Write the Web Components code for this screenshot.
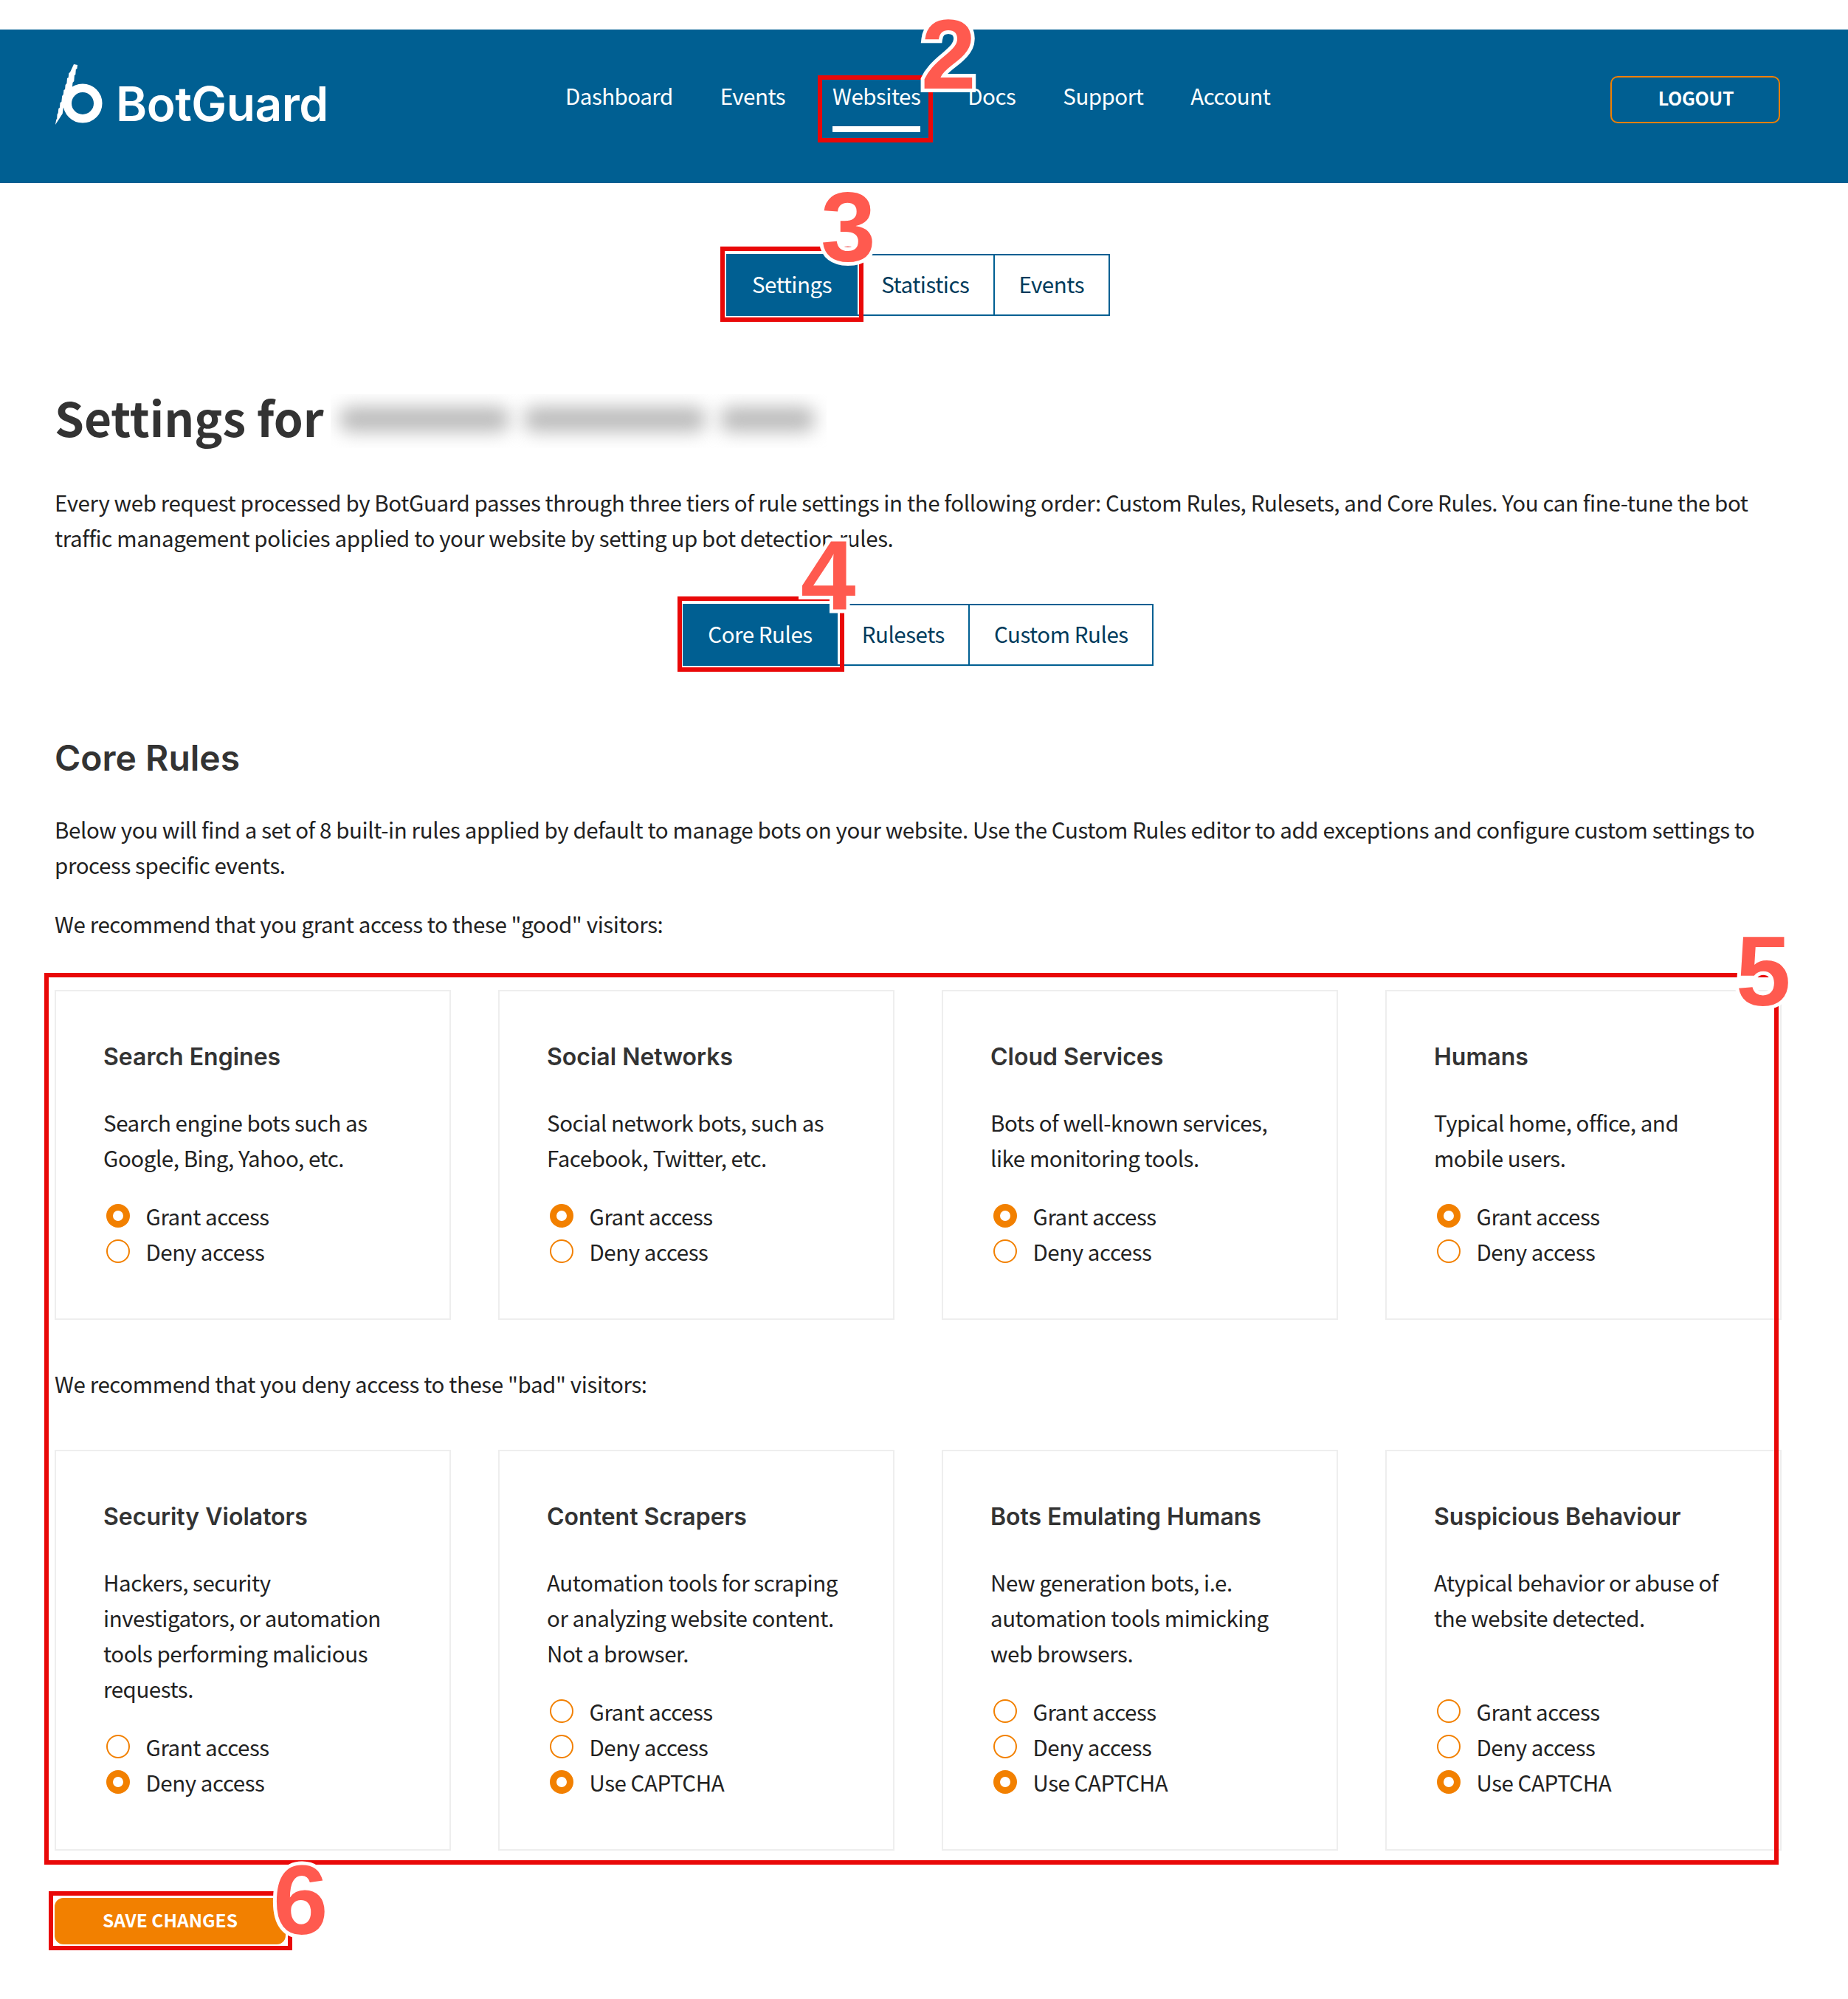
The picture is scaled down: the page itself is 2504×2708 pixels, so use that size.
<!DOCTYPE html>
<html lang="en">
<head>
<meta charset="utf-8">
<title>BotGuard settings</title>
<style>
  html, body { margin: 0; background: #fff; }
</style>
</head>
<body>
<bg-page></bg-page>

<script>
const BODY_FONT = '"Noto Sans CJK SC", "Noto Sans", sans-serif';
const TITLE_FONT = 'Inter, "Liberation Sans", sans-serif';

// Top bar with logo, navigation and logout
class BgHeader extends HTMLElement {
  constructor() {
    super();
    this.attachShadow({ mode: "open" });
  }

  connectedCallback() {
    const links = ["Dashboard", "Events", "Websites", "Docs", "Support", "Account"];
    const active = this.getAttribute("active");
    this.shadowRoot.innerHTML = `
      <style>
        :host {
          display: flex;
          height: 208px;
          padding: 0 92px 0 74px;
          background: #005f92;
          color: #fff;
          font-family: ${BODY_FONT};
        }
        .logo {
          width: 692px;
          flex: none;
          display: flex;
          align-items: flex-start;
          padding-top: 46px;
          box-sizing: border-box;
        }
        .logo svg { width: 68px; height: 84px; flex: none; }
        .logo span {
          font: 600 64px/1 ${TITLE_FONT};
          letter-spacing: -0.5px;
          margin: 23px 0 0 15px;
        }
        nav { display: flex; gap: 64px; align-items: flex-start; }
        a {
          margin-top: 65px;
          padding-bottom: 26px;
          font-size: 29.5px;
          letter-spacing: -0.5px;
          line-height: 48px;
          color: #fff;
          text-decoration: none;
        }
        a.on { padding-bottom: 18px; border-bottom: 8px solid #fff; }
        button {
          margin: 63px 0 0 auto;
          width: 230px;
          height: 64px;
          padding: 0 0 6px 2px;
          border: 2px solid #f28000;
          border-radius: 10px;
          background: none;
          color: #fff;
          font: 700 25px ${BODY_FONT};
          letter-spacing: -0.3px;
        }
      </style>
      <div class="logo">
        <svg viewBox="0 0 68 84" aria-hidden="true">
          <circle cx="38" cy="54" r="20.75" fill="none" stroke="#fff" stroke-width="11.5"/>
          <path fill="#fff" d="M26 1l5 1-.6 5-1.6 1-.5 7-1.4 1-.6 8-1.8 2-.8 8-2 1-1.2 8-2.4 2-1 7-2 1-1.2 6-2 1-1.2 8L1 83l1.2-7 1-1 .3-6 1.2-2 .6-6 1.6-1 .6-7 1.8-1 .9-8 1.6-2 .6-6 1.7-1 .5-6 1.8-2 .6-7 1.7-1 .6-6 1.6-1z"/>
        </svg>
        <span>BotGuard</span>
      </div>
      <nav>${links.map((l) => `<a href="#" class="${l === active ? "on" : ""}">${l}</a>`).join("")}</nav>
      <button type="button">LOGOUT</button>
    `;
  }
}
customElements.define("bg-header", BgHeader);

// Segmented tab control
class BgTabs extends HTMLElement {
  constructor() {
    super();
    this.attachShadow({ mode: "open" });
  }

  connectedCallback() {
    const items = this.getAttribute("items").split(",");
    const active = this.getAttribute("active");
    this.shadowRoot.innerHTML = `
      <style>
        :host {
          display: flex;
          justify-content: center;
          font-family: ${BODY_FONT};
        }
        div {
          display: flex;
          height: 84px;
          box-sizing: border-box;
          border: 2px solid #005f92;
        }
        span {
          display: flex;
          align-items: center;
          padding: 0 32.5px 5px;
          font-size: 29.5px;
          letter-spacing: -0.45px;
          color: #003b5c;
          border-left: 2px solid #005f92;
        }
        span:first-child { border-left: 0; }
        span.on { background: #005f92; color: #fff; }
      </style>
      <div>${items.map((i) => `<span class="${i === active ? "on" : ""}">${i}</span>`).join("")}</div>
    `;
  }
}
customElements.define("bg-tabs", BgTabs);

// Radio option, drawn with a css ring
class BgRadio extends HTMLElement {
  constructor() {
    super();
    this.attachShadow({ mode: "open" });
    this.shadowRoot.innerHTML = `
      <style>
        :host {
          display: flex;
          align-items: center;
          gap: 21.5px;
          height: 48px;
          padding-left: 4px;
        }
        i {
          width: 32px;
          height: 32px;
          box-sizing: border-box;
          border: 2px solid #f28000;
          border-radius: 50%;
          background: #fff;
          flex: none;
          margin-top: -2px;
        }
        span { margin-bottom: 3px; }
        :host([checked]) i { border-width: 9px; }
      </style>
      <i></i><span><slot></slot></span>
    `;
  }
}
customElements.define("bg-radio", BgRadio);

// One rule card: title, description slot, radio options
class BgRuleCard extends HTMLElement {
  constructor() {
    super();
    this.attachShadow({ mode: "open" });
  }

  connectedCallback() {
    const options = this.getAttribute("options").split(",");
    const checked = this.getAttribute("checked");
    this.shadowRoot.innerHTML = `
      <style>
        :host {
          display: flex;
          flex-direction: column;
          box-sizing: border-box;
          padding: 66px 66px 66px 64px;
          border: 2px solid #eee;
          font-family: ${BODY_FONT};
          font-size: 29.5px;
          letter-spacing: -0.45px;
          line-height: 48px;
          color: #222;
        }
        h3 {
          margin: 0 0 41px;
          font: 600 32px/46px ${TITLE_FONT};
          letter-spacing: 0;
          color: #333;
        }
        .opts { margin-top: auto; padding-top: 32px; }
      </style>
      <h3>${this.getAttribute("heading")}</h3>
      <div><slot></slot></div>
      <div class="opts">
        ${options.map((o) => `<bg-radio ${o === checked ? "checked" : ""}>${o}</bg-radio>`).join("")}
      </div>
    `;
  }
}
customElements.define("bg-rule-card", BgRuleCard);

// Annotation laid over the screenshot: red frame and/or big numeral
class BgCallout extends HTMLElement {
  constructor() {
    super();
    this.attachShadow({ mode: "open" });
  }

  connectedCallback() {
    const [x, y, w, h] = this.getAttribute("at").split(",");
    const num = this.getAttribute("num");
    this.shadowRoot.innerHTML = `
      <style>
        :host {
          position: absolute;
          left: ${x}px;
          top: ${y}px;
          ${num ? "" : `width: ${w}px; height: ${h}px;`}
          box-sizing: border-box;
          ${num ? "" : "border: 6px solid #e90808;"}
          pointer-events: none;
        }
        span {
          display: block;
          font: 700 134px/100px "Liberation Sans", Arial, sans-serif;
          letter-spacing: 0;
          color: #ff5a4f;
          -webkit-text-stroke: 10px #fff;
          paint-order: stroke fill;
        }
      </style>
      ${num ? `<span>${num}</span>` : ""}
    `;
  }
}
customElements.define("bg-callout", BgCallout);

// Blurred out domain name next to the page title
class BgRedacted extends HTMLElement {
  constructor() {
    super();
    this.attachShadow({ mode: "open" });
    this.shadowRoot.innerHTML = `
      <style>
        :host {
          display: flex;
          gap: 20px;
          width: 672px;
          height: 73px;
          box-sizing: border-box;
          padding: 17px 14px 0 12px;
          overflow: hidden;
        }
        i { height: 34px; background: #bbb; border-radius: 14px; filter: blur(12px); }
      </style>
      <i style="width:230px"></i><i style="width:246px"></i><i style="width:128px"></i>
    `;
  }
}
customElements.define("bg-redacted", BgRedacted);

// Whole page
class BgPage extends HTMLElement {
  constructor() {
    super();
    this.attachShadow({ mode: "open" });
    this.shadowRoot.innerHTML = `
      <style>
        :host {
          display: block;
          position: relative;
          height: 2708px;
          padding-top: 40px;
          box-sizing: border-box;
          overflow: hidden;
          font-family: ${BODY_FONT};
          font-size: 29.5px;
          letter-spacing: -0.39px;
          line-height: 48px;
          color: #222;
        }
        main { width: 2340px; margin-left: 74px; }
        h1 {
          display: flex;
          gap: 9px;
          align-items: center;
          margin: 102px 0 46px;
          height: 80px;
          font-size: 64px;
          font-weight: 700;
          letter-spacing: 0;
          color: #333;
        }
        h1 span { position: relative; top: -6px; }
        h2 {
          margin: 95px 0 42px;
          font: 600 48px/60px ${TITLE_FONT};
          letter-spacing: 0;
          color: #333;
        }
        p { margin: 0; }
        .gap { margin-top: 32px; }
        .lead { margin-bottom: 66px; }
        .after { margin-top: 62px; }
        .grid { display: grid; grid-template-columns: repeat(4, 537px); gap: 64px; }
        .row1 { height: 447px; }
        .row2 { height: 542px; }
        .tabs2 { margin-top: 66px; }
        .tabs1 { margin-top: 96px; }
        button {
          display: block;
          margin-top: 65px;
          width: 313px;
          height: 63px;
          padding-bottom: 5px;
          border: 0;
          border-radius: 12px;
          background: #f28000;
          color: #fff;
          font: 700 24.5px ${BODY_FONT};
        }
      </style>
      <bg-header active="Websites"></bg-header>
      <main>
        <bg-tabs class="tabs1" items="Settings,Statistics,Events" active="Settings"></bg-tabs>
        <h1><span>Settings for</span> <bg-redacted></bg-redacted></h1>
        <p>Every web request processed by BotGuard passes through three tiers of rule settings in the following order: Custom Rules, Rulesets, and Core Rules. You can fine-tune the bot traffic management policies applied to your website by setting up bot detection rules.</p>
        <bg-tabs class="tabs2" items="Core Rules,Rulesets,Custom Rules" active="Core Rules"></bg-tabs>
        <h2>Core Rules</h2>
        <p>Below you will find a set of 8 built-in rules applied by default to manage bots on your website. Use the Custom Rules editor to add exceptions and configure custom settings to process specific events.</p>
        <p class="gap lead">We recommend that you grant access to these "good" visitors:</p>
        <div class="grid row1">
          <bg-rule-card heading="Search Engines" options="Grant access,Deny access" checked="Grant access">Search engine bots such as Google, Bing, Yahoo, etc.</bg-rule-card>
          <bg-rule-card heading="Social Networks" options="Grant access,Deny access" checked="Grant access">Social network bots, such as Facebook, Twitter, etc.</bg-rule-card>
          <bg-rule-card heading="Cloud Services" options="Grant access,Deny access" checked="Grant access">Bots of well-known services, like monitoring tools.</bg-rule-card>
          <bg-rule-card heading="Humans" options="Grant access,Deny access" checked="Grant access">Typical home, office, and mobile users.</bg-rule-card>
        </div>
        <p class="after lead">We recommend that you deny access to these "bad" visitors:</p>
        <div class="grid row2">
          <bg-rule-card heading="Security Violators" options="Grant access,Deny access" checked="Deny access">Hackers, security investigators, or automation tools performing malicious requests.</bg-rule-card>
          <bg-rule-card heading="Content Scrapers" options="Grant access,Deny access,Use CAPTCHA" checked="Use CAPTCHA">Automation tools for scraping or analyzing website content. Not a browser.</bg-rule-card>
          <bg-rule-card heading="Bots Emulating Humans" options="Grant access,Deny access,Use CAPTCHA" checked="Use CAPTCHA">New generation bots, i.e. automation tools mimicking web browsers.</bg-rule-card>
          <bg-rule-card heading="Suspicious Behaviour" options="Grant access,Deny access,Use CAPTCHA" checked="Use CAPTCHA">Atypical behavior or abuse of the website detected.</bg-rule-card>
        </div>
        <button type="button">SAVE CHANGES</button>
      </main>
      <bg-callout at="1108,102,156,91"></bg-callout>
      <bg-callout at="976,334,194,102"></bg-callout>
      <bg-callout at="918,808,226,102"></bg-callout>
      <bg-callout at="60,1318,2350,1208"></bg-callout>
      <bg-callout at="66,2562,330,80"></bg-callout>
      <bg-callout at="1248,24" num="2"></bg-callout>
      <bg-callout at="1112,258" num="3"></bg-callout>
      <bg-callout at="1085,730" num="4"></bg-callout>
      <bg-callout at="2352,1266" num="5"></bg-callout>
      <bg-callout at="370,2524" num="6"></bg-callout>
    `;
  }
}
customElements.define("bg-page", BgPage);
</script>
</body>
</html>
